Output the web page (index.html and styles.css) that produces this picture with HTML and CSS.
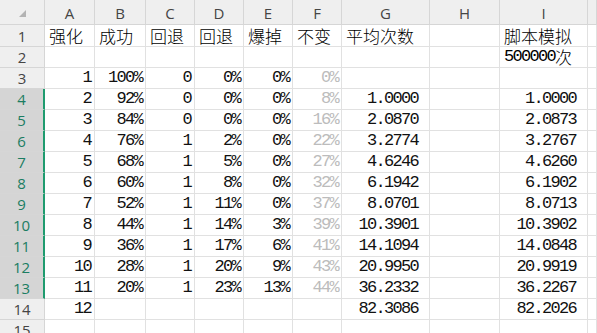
FILE: index.html
```html
<!DOCTYPE html>
<html lang="zh">
<head>
<meta charset="utf-8">
<link rel="stylesheet" href="styles.css">
</head>
<body>
<div class="sheet">
  <div class="row">
    <div class="c hd corner"><svg width="7" height="7" viewBox="0 0 7 7"><polygon points="7,0 7,7 0,7" fill="#b3b3b3"/></svg></div>
    <div class="c hd">A</div><div class="c hd">B</div><div class="c hd">C</div><div class="c hd">D</div><div class="c hd">E</div><div class="c hd">F</div><div class="c hd">G</div><div class="c hd">H</div><div class="c hd">I</div><div class="c hd"></div>
  </div>
  <div class="row">
    <div class="c hd rh">1</div>
    <div class="c t">强化</div><div class="c t">成功</div><div class="c t">回退</div><div class="c t">回退</div><div class="c t">爆掉</div><div class="c t">不变</div><div class="c t">平均次数</div><div class="c"></div><div class="c t">脚本模拟</div><div class="c"></div>
  </div>
  <div class="row">
    <div class="c hd rh">2</div>
    <div class="c"></div><div class="c"></div><div class="c"></div><div class="c"></div><div class="c"></div><div class="c"></div><div class="c"></div><div class="c"></div><div class="c t"><span class="n">500000</span>次</div><div class="c"></div>
  </div>
  <div class="row">
    <div class="c hd rh">3</div>
    <div class="c n">1</div><div class="c n">100%</div><div class="c n">0</div><div class="c n">0%</div><div class="c n">0%</div><div class="c n g">0%</div><div class="c"></div><div class="c"></div><div class="c"></div><div class="c"></div>
  </div>
  <div class="row">
    <div class="c hd rh sel">4</div>
    <div class="c n">2</div><div class="c n">92%</div><div class="c n">0</div><div class="c n">0%</div><div class="c n">0%</div><div class="c n g">8%</div><div class="c n p">1.0000</div><div class="c"></div><div class="c n p">1.0000</div><div class="c"></div>
  </div>
  <div class="row">
    <div class="c hd rh sel">5</div>
    <div class="c n">3</div><div class="c n">84%</div><div class="c n">0</div><div class="c n">0%</div><div class="c n">0%</div><div class="c n g">16%</div><div class="c n p">2.0870</div><div class="c"></div><div class="c n p">2.0873</div><div class="c"></div>
  </div>
  <div class="row">
    <div class="c hd rh sel">6</div>
    <div class="c n">4</div><div class="c n">76%</div><div class="c n">1</div><div class="c n">2%</div><div class="c n">0%</div><div class="c n g">22%</div><div class="c n p">3.2774</div><div class="c"></div><div class="c n p">3.2767</div><div class="c"></div>
  </div>
  <div class="row">
    <div class="c hd rh sel">7</div>
    <div class="c n">5</div><div class="c n">68%</div><div class="c n">1</div><div class="c n">5%</div><div class="c n">0%</div><div class="c n g">27%</div><div class="c n p">4.6246</div><div class="c"></div><div class="c n p">4.6260</div><div class="c"></div>
  </div>
  <div class="row">
    <div class="c hd rh sel">8</div>
    <div class="c n">6</div><div class="c n">60%</div><div class="c n">1</div><div class="c n">8%</div><div class="c n">0%</div><div class="c n g">32%</div><div class="c n p">6.1942</div><div class="c"></div><div class="c n p">6.1902</div><div class="c"></div>
  </div>
  <div class="row">
    <div class="c hd rh sel">9</div>
    <div class="c n">7</div><div class="c n">52%</div><div class="c n">1</div><div class="c n">11%</div><div class="c n">0%</div><div class="c n g">37%</div><div class="c n p">8.0701</div><div class="c"></div><div class="c n p">8.0713</div><div class="c"></div>
  </div>
  <div class="row">
    <div class="c hd rh sel">10</div>
    <div class="c n">8</div><div class="c n">44%</div><div class="c n">1</div><div class="c n">14%</div><div class="c n">3%</div><div class="c n g">39%</div><div class="c n p">10.3901</div><div class="c"></div><div class="c n p">10.3902</div><div class="c"></div>
  </div>
  <div class="row">
    <div class="c hd rh sel">11</div>
    <div class="c n">9</div><div class="c n">36%</div><div class="c n">1</div><div class="c n">17%</div><div class="c n">6%</div><div class="c n g">41%</div><div class="c n p">14.1094</div><div class="c"></div><div class="c n p">14.0848</div><div class="c"></div>
  </div>
  <div class="row">
    <div class="c hd rh sel">12</div>
    <div class="c n">10</div><div class="c n">28%</div><div class="c n">1</div><div class="c n">20%</div><div class="c n">9%</div><div class="c n g">43%</div><div class="c n p">20.9950</div><div class="c"></div><div class="c n p">20.9919</div><div class="c"></div>
  </div>
  <div class="row">
    <div class="c hd rh sel">13</div>
    <div class="c n">11</div><div class="c n">20%</div><div class="c n">1</div><div class="c n">23%</div><div class="c n">13%</div><div class="c n g">44%</div><div class="c n p">36.2332</div><div class="c"></div><div class="c n p">36.2267</div><div class="c"></div>
  </div>
  <div class="row">
    <div class="c hd rh">14</div>
    <div class="c n">12</div><div class="c"></div><div class="c"></div><div class="c"></div><div class="c"></div><div class="c"></div><div class="c n p">82.3086</div><div class="c"></div><div class="c n p">82.2026</div><div class="c"></div>
  </div>
  <div class="row">
    <div class="c hd rh">15</div>
    <div class="c"></div><div class="c"></div><div class="c"></div><div class="c"></div><div class="c"></div><div class="c"></div><div class="c"></div><div class="c"></div><div class="c"></div><div class="c"></div>
  </div>
</div>
</body>
</html>
```
FILE: styles.css
```css
html, body {
  margin: 0;
  background: #fff;
  overflow: hidden;
}
.sheet {
  display: grid;
  grid-template-columns: 45px 50px 51px 49px 49px 49px 49px 88px 70px 88px 1fr;
  grid-template-rows: 25px 22px repeat(15, 21px);
  height: 333px;
  overflow: hidden;
  font-family: "Liberation Mono", "Noto Sans CJK SC", monospace;
  font-size: 17px;
  color: #111;
}
.row { display: contents; }
.c {
  box-sizing: border-box;
  border-right: 1px solid #e1e1e1;
  border-bottom: 1px solid #e1e1e1;
  display: flex;
  align-items: flex-end;
  justify-content: flex-end;
  padding: 0 3px 1px 3px;
  line-height: 18px;
  white-space: nowrap;
}
.hd {
  background: #efefef;
  border-color: #d6d6d6;
  justify-content: center;
  align-items: center;
  padding: 2px 0 0 0;
  font-family: "Open Sans", "Noto Sans", sans-serif;
  font-size: 15px;
  color: #454545;
}
.rh { padding: 0; }
.corner {
  justify-content: flex-end;
  align-items: flex-end;
  padding: 0 18px 7px 0;
}
.corner svg { display: block; }
.sel {
  background: #d5d5d5;
  color: #1b7d62;
  border-right: 2px solid #1f9b6f;
}
.t {
  justify-content: flex-start;
  font-family: "Noto Sans CJK SC", sans-serif;
  font-weight: 300;
  color: #000;
  padding-left: 4px;
}
.n { letter-spacing: -1.7px; font-family: "Liberation Mono", monospace; }
.g { color: #bcbcbc; }
.p { padding-right: 11px; }
```
